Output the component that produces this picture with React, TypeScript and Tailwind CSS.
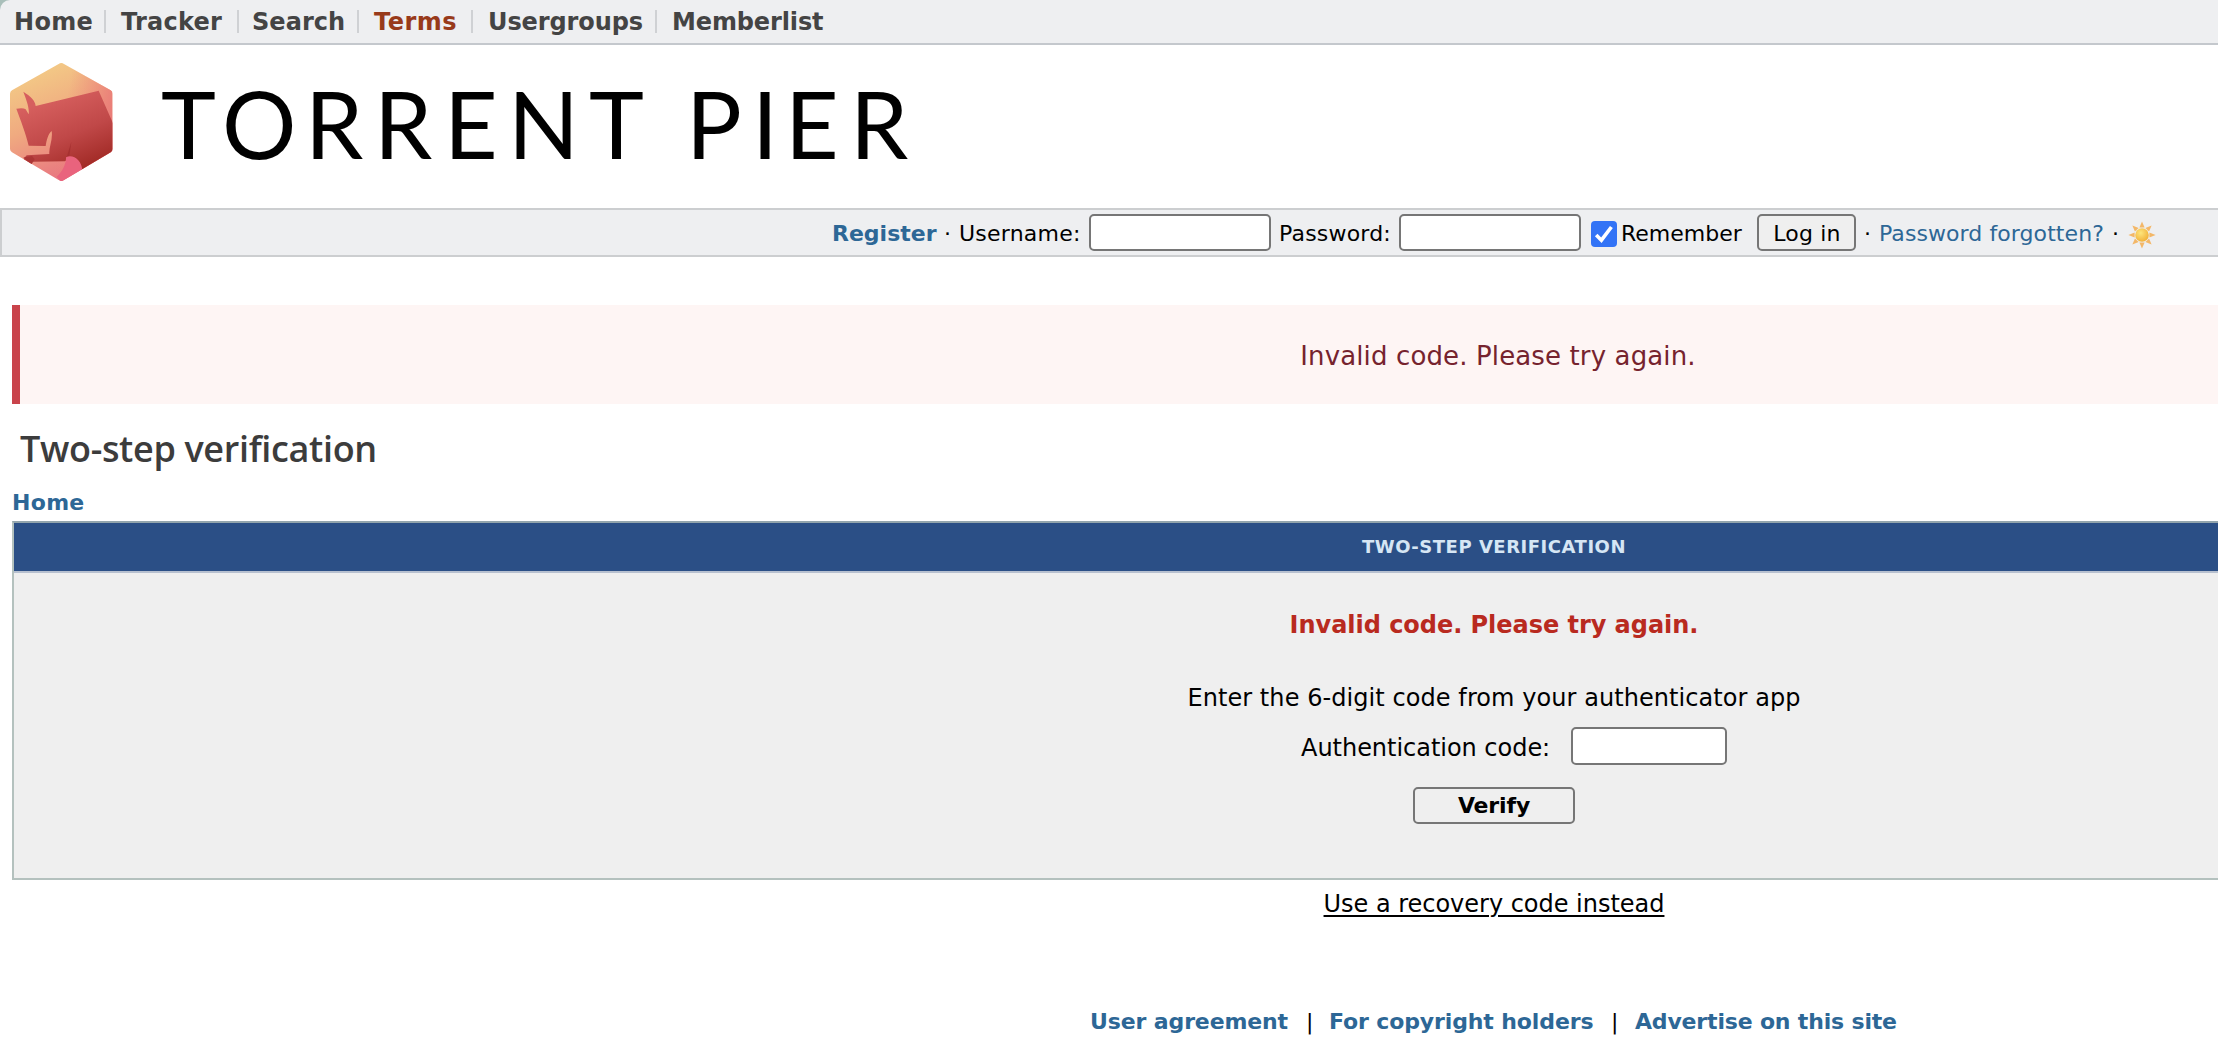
import { useState } from "react";

const NAV = [
  { label: "Home", cls: "ml-3.5 w-[90px] tracking-[0.3px]" },
  { label: "Tracker", cls: "ml-[15px] w-[116px] tracking-[0.24px]" },
  { label: "Search", cls: "ml-[13px] w-[105px] tracking-[0.04px]" },
  { label: "Terms", cls: "ml-[15px] w-[97px] text-[#983a1a] tracking-[0.5px]" },
  { label: "Usergroups", cls: "ml-[15px] w-[167px] tracking-[-0.1px]" },
  { label: "Memberlist", cls: "ml-[15px] w-[160px] tracking-[-0.12px]" },
];

const RAYS = [0, 45, 90, 135, 180, 225, 270, 315];

function Emblem() {
  return (
    <svg className="h-[140px] w-[160px] shrink-0" viewBox="0 0 480 420">
      <defs>
        <linearGradient id="sky" x1="0.25" y1="0.05" x2="0.6" y2="1">
          <stop offset="0" stopColor="#f3cb86" />
          <stop offset="0.45" stopColor="#f0aa80" />
          <stop offset="1" stopColor="#e76f80" />
        </linearGradient>
        <linearGradient id="edge" x1="0.55" y1="0.3" x2="1" y2="0.4">
          <stop offset="0" stopColor="#ee8a7c" stopOpacity="0" />
          <stop offset="1" stopColor="#ea7d78" />
        </linearGradient>
        <linearGradient id="bull" x1="0.35" y1="0.1" x2="0.8" y2="1">
          <stop offset="0" stopColor="#d65f5e" />
          <stop offset="0.5" stopColor="#c04848" />
          <stop offset="1" stopColor="#9d2621" />
        </linearGradient>
        <clipPath id="hex">
          <path d="M176 42q8-6 16 0L332 121q6 4 6 10V297q0 6-6 10L192 390q-8 6-16 0L36 307q-6-4-6-10V131q0-6 6-10Z" />
        </clipPath>
      </defs>
      <g clipPath="url(#hex)">
        <path fill="url(#sky)" d="M30 36H338V396H30Z" />
        <path fill="url(#edge)" d="M30 36H338V396H30Z" />
        <path
          fill="url(#bull)"
          d="M107 168L296 122L340 222V310L247 360L200 330L195 334L98 335L94 344L70 328L80 316L148 312C146 292 159 270 155 243C144 252 140 270 137 288L86 287C78 252 61 208 49 176Q70 172 77 178L86 193C89 172 77 145 70 125C91 138 106 152 107 168Z"
        />
        <path fill="#a63131" d="M214 276L208 318L199 326L204 308Z" />
        <path fill="#a63131" d="M70 322L96 318L104 328L94 344Z" opacity="0.7" />
        <path fill="#e9637d" d="M198 322C218 311 246 330 247 362L184 396L170 380C188 366 199 340 198 322Z" />
      </g>
    </svg>
  );
}

function Sun() {
  return (
    <svg className="size-7" viewBox="-14 -14 28 28">
      <defs>
        <radialGradient id="sun" cx="0.4" cy="0.35" r="0.7">
          <stop offset="0" stopColor="#fde57c" />
          <stop offset="1" stopColor="#f1ae35" />
        </radialGradient>
      </defs>
      {RAYS.map((a) => (
        <path key={a} d="M-2.6 -7.4H2.6L0 -13.6Z" fill="#f3b768" transform={`rotate(${a})`} />
      ))}
      <circle r="6.8" fill="url(#sun)" />
    </svg>
  );
}

export default function App() {
  const [remember, setRemember] = useState(true);

  return (
    <div className="h-[1056px] w-full overflow-hidden bg-white font-['DejaVu_Sans',Verdana,sans-serif] text-[22px] text-black">
      <div className="flex w-[2988px] flex-col">
        {/* main navigation */}
        <div className="bg-[#a9bfba]">
          <nav className="flex h-[45px] items-center rounded-tl-[10px] border-b-2 border-[#c4c8cd] bg-[#eeeff1] text-2xl font-bold whitespace-nowrap text-[#444]">
            {NAV.map((n, i) => (
              <div key={n.label} className="flex items-center">
                <a href="#" className={n.cls}>{n.label}</a>
                {i < NAV.length - 1 && <span className="h-[23px] w-0.5 bg-[#cfd1d4]" />}
              </div>
            ))}
          </nav>
        </div>

        {/* logo */}
        <header className="flex h-[163px] pt-[5px]">
          <Emblem />
          <svg className="h-[140px] w-[780px]" viewBox="160 50 780 140">
            <text
              x="161 222 305 374 444 508 589 686 752 785 850"
              y="159"
              fontSize="93"
              fontFamily="Lato, sans-serif"
            >
              TORRENTPIER
            </text>
          </svg>
        </header>

        {/* login bar */}
        <form
          className="flex h-[49px] items-center border-2 border-[#ccced0] bg-[#eeeff1] pl-[830px] whitespace-nowrap"
          onSubmit={(e) => e.preventDefault()}
        >
          <a href="#" className="mt-px w-[112px] font-bold text-[#2d6796]">Register</a>
          <span className="mt-px w-[15px]">·</span>
          <label className="mt-px w-[130px] tracking-[0.22px]">Username:</label>
          <input className="h-[37px] w-[182px] rounded-[5px] border-2 border-[#767676] bg-white px-1" />
          <label className="mt-px ml-2 w-[120px] tracking-[0.2px]">Password:</label>
          <input type="password" className="h-[37px] w-[182px] rounded-[5px] border-2 border-[#767676] bg-white px-1" />
          <label className="ml-2.5 flex items-center">
            <input type="checkbox" className="peer sr-only" checked={remember} onChange={() => setRemember(!remember)} />
            <svg className="mt-[3px] size-[26px]" viewBox="0 0 26 26">
              <rect width="26" height="26" rx="4" fill={remember ? "#3273f6" : "#fff"} />
              {remember && <path d="M5.2 14L10.4 19.2L20.4 6" fill="none" stroke="#fff" strokeWidth="3.6" />}
            </svg>
            <span className="mt-px ml-1 w-[136px]">Remember</span>
          </label>
          <button className="h-[37px] w-[99px] rounded-[5px] border-2 border-[#767676] bg-[#efefef] pt-px pl-px tracking-[0.2px]">Log in</button>
          <span className="mt-px ml-2 w-[15px]">·</span>
          <a href="#" className="mt-px w-[233px] tracking-[0.08px] text-[#2d6796]">Password forgotten?</a>
          <span className="mt-px w-4">·</span>
          <span className="mt-1"><Sun /></span>
        </form>

        <div className="mx-3 mt-12 flex h-[99px] items-center justify-center border-l-8 border-[#c9434b] bg-[#fef5f4] pt-[3px] text-[26px] tracking-[0.13px] text-[#76232e]">
          Invalid code. Please try again.
        </div>

        <h1 className="mt-[9px] ml-5 h-[71px] font-['Open_Sans',sans-serif] text-4xl leading-[72px] font-semibold tracking-[-0.34px] text-[#3c3c3c]">
          Two-step verification
        </h1>
        <a href="#" className="ml-3 h-[37px] leading-[37px] font-bold tracking-[0.3px] text-[#2d6796]">Home</a>

        {/* verification form */}
        <section className="mx-3 border-2 border-[#b4c1be] border-t-[#93a5ad] bg-[#efefef]">
          <h2 className="h-[50px] border-b-2 border-[#b7c0cf] bg-[#2b4f86] text-center text-lg leading-12 font-bold tracking-[0.52px] text-[#d6e6f4]">
            TWO-STEP VERIFICATION
          </h2>
          <div className="flex h-[305px] flex-col items-center pt-8 text-2xl">
            <p className="h-10 leading-10 font-bold tracking-[-0.04px] text-[#b92a1f]">Invalid code. Please try again.</p>
            <p className="mt-[33px] h-10 leading-10 tracking-[0.07px]">Enter the 6-digit code from your authenticator app</p>
            <label className="mt-[9px] ml-10 flex h-[38px] items-center">
              <span className="mt-[3px] w-[270px] tracking-[-0.03px]">Authentication code:</span>
              <input className="h-[38px] w-[156px] rounded-[5px] border-2 border-[#767676] bg-white px-1" />
            </label>
            <button className="mt-[22px] h-[37px] w-[162px] rounded-[5px] border-2 border-[#767676] bg-[#efefef] pt-px text-[22px] leading-none font-bold tracking-[-0.14px]">
              Verify
            </button>
          </div>
        </section>

        <a href="#" className="mt-1 h-10 self-center text-2xl/10 tracking-[-0.02px] underline decoration-2 underline-offset-3">
          Use a recovery code instead
        </a>

        <footer className="mt-[77px] flex h-10 items-center pl-[1090px] font-bold tracking-[-0.12px] whitespace-nowrap text-[#2d6796]">
          <a href="#" className="w-[216px]">User agreement</a>
          <span className="w-[23px] font-normal text-black">|</span>
          <a href="#" className="w-[282px]">For copyright holders</a>
          <span className="w-6 font-normal text-black">|</span>
          <a href="#" className="tracking-[-0.17px]">Advertise on this site</a>
        </footer>
      </div>
    </div>
  );
}
